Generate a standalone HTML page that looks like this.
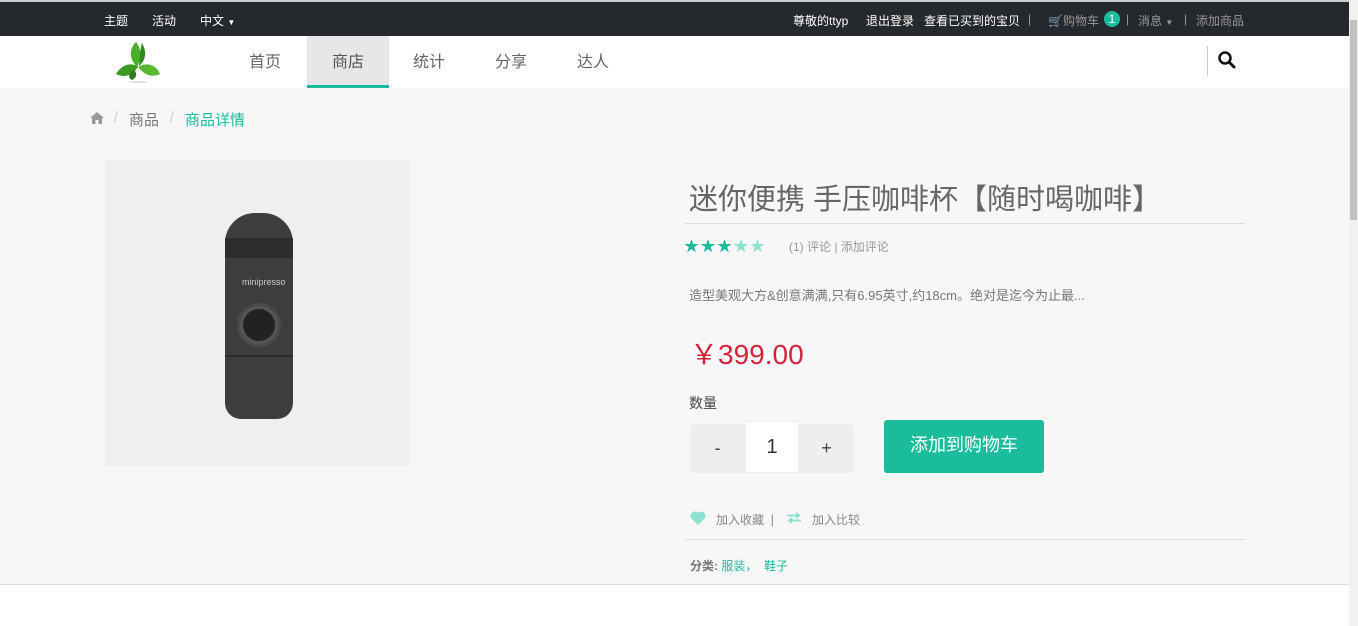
<!DOCTYPE html>
<html><head><meta charset="utf-8"><style>
*{margin:0;padding:0;box-sizing:border-box}
body{width:1358px;height:626px;overflow:hidden;background:#fff;font-family:"Liberation Sans","Noto Sans CJK SC",sans-serif;position:relative}
.a{position:absolute;white-space:nowrap}
#top{left:0;top:0;width:1349px;height:36px;background:#25282d;border-top:2px solid #ccc}
#top .a{font-size:12px;color:#fff;top:10px}
#top .g{color:#999}
#nav{left:0;top:36px;width:1349px;height:52px;background:#fff}
#nav .i{font-size:16px;color:#666;top:12px}
#main{left:0;top:88px;width:1349px;height:497px;background:#f7f7f7;border-bottom:1px solid #ddd}
#sb{left:1349px;top:0;width:9px;height:626px;background:#f1f1f1}
</style></head><body>
<div class="a" id="top">
 <span class="a" style="left:104px">主题</span>
 <span class="a" style="left:152px">活动</span>
 <span class="a" style="left:200px">中文 <span style="font-size:8px">▼</span></span>
 <span class="a" style="left:793px">尊敬的ttyp</span>
 <span class="a" style="left:866px">退出登录</span>
 <span class="a" style="left:924px">查看已买到的宝贝</span>
 <span class="a g" style="left:1028px">|</span>
 <span class="a g" style="left:1048px">🛒购物车</span>
 <span class="a" style="left:1104px;top:9px;width:16px;height:16px;border-radius:8px;background:#1abc9c;color:#fff;text-align:center;line-height:16px">1</span>
 <span class="a g" style="left:1126px">|</span>
 <span class="a g" style="left:1138px">消息 <span style="font-size:8px">▼</span></span>
 <span class="a g" style="left:1184px">|</span>
 <span class="a g" style="left:1196px">添加商品</span>
</div>
<div class="a" id="nav">
 <svg class="a" style="left:114px;top:4px" width="48" height="44" viewBox="0 0 48 44"><path d="M22 2 C14 10 16 20 23 27 C28 18 28 10 22 2Z" fill="#4caf2c"/><path d="M28 3 C26 10 26 18 25 26 C32 20 33 12 28 3Z" fill="#2e8b1f"/><path d="M2 34 C8 24 18 22 24 27 C18 36 10 38 2 34Z" fill="#3a9a22"/><path d="M24 27 C32 22 42 24 46 34 C38 38 30 35 24 27Z" fill="#5ab832"/><path d="M20 30 C14 34 14 38 18 40 C22 38 24 34 20 30Z" fill="#2d7a1a"/><ellipse cx="24" cy="42" rx="10" ry="1" fill="#ddd"/></svg>
 <div class="a" style="left:307px;top:0;width:82px;height:52px;background:#e7e7e7;border-bottom:3px solid #1abc9c"></div>
 <span class="a i" style="left:249px">首页</span>
 <span class="a i" style="left:332px;color:#555">商店</span>
 <span class="a i" style="left:413px">统计</span>
 <span class="a i" style="left:495px">分享</span>
 <span class="a i" style="left:577px">达人</span>
 <div class="a" style="left:1207px;top:10px;width:1px;height:30px;background:#ccc"></div>
 <svg class="a" style="left:1217px;top:14px" width="20" height="20" viewBox="0 0 20 20"><circle cx="8" cy="8" r="5.5" stroke="#111" stroke-width="2.5" fill="none"/><path d="M12 12 L17 17" stroke="#111" stroke-width="3" stroke-linecap="round"/></svg>
</div>
<div class="a" id="main">
 <svg class="a" style="left:90px;top:24px" width="14" height="12" viewBox="0 0 14 12"><path d="M7 0 L14 6 L12 6 L12 12 L8.5 12 L8.5 8 L5.5 8 L5.5 12 L2 12 L2 6 L0 6Z" fill="#999"/></svg>
 <span class="a" style="left:114px;top:21px;font-size:15px;color:#ccc">/</span>
 <span class="a" style="left:129px;top:21px;font-size:15px;color:#777">商品</span>
 <span class="a" style="left:170px;top:21px;font-size:15px;color:#ccc">/</span>
 <span class="a" style="left:185px;top:21px;font-size:15px;color:#1abc9c">商品详情</span>
 <div class="a" style="left:105px;top:72px;width:305px;height:306px;background:#efefef">
  <div class="a" style="left:120px;top:53px;width:68px;height:206px;background:#3c3d3f;border-radius:30px 30px 16px 16px"></div>
  <div class="a" style="left:120px;top:78px;width:68px;height:20px;background:#2c2d2f"></div>
  <div class="a" style="left:120px;top:195px;width:68px;height:2px;background:#2a2a2c"></div>
  <span class="a" style="left:137px;top:117px;font-size:9px;color:#ccc">minipresso</span>
  <div class="a" style="left:132px;top:143px;width:44px;height:44px;border-radius:22px;background:#555;border:3px solid #4a4a4a"></div>
  <div class="a" style="left:138px;top:149px;width:32px;height:32px;border-radius:16px;background:#222"></div>
 </div>
 <span class="a" style="left:689px;top:88px;font-size:29px;color:#666">迷你便携 手压咖啡杯【随时喝咖啡】</span>
 <div class="a" style="left:685px;top:135px;width:560px;height:1px;background:#ddd"></div>
 <span class="a" style="left:684px;top:147px;font-size:15px;letter-spacing:1.5px;color:#1abc9c">★★★<span style="color:#8ee0d0">★★</span></span>
 <span class="a" style="left:789px;top:150px;font-size:12px;color:#999">(1) 评论 | 添加评论</span>
 <span class="a" style="left:689px;top:197px;font-size:13px;color:#777">造型美观大方&amp;创意满满,只有6.95英寸,约18cm。绝对是迄今为止最...</span>
 <span class="a" style="left:690px;top:245px;font-size:28px;color:#d0253a">￥399.00</span>
 <span class="a" style="left:689px;top:305px;font-size:14px;color:#444">数量</span>
 <div class="a" style="left:690px;top:336px;width:55px;height:49px;background:#eee;border-radius:3px 0 0 3px;text-align:center;line-height:49px;font-size:18px;color:#444">-</div>
 <div class="a" style="left:745px;top:333px;width:54px;height:52px;background:#fff;border:1px solid #eee;text-align:center;line-height:50px;font-size:20px;color:#333">1</div>
 <div class="a" style="left:799px;top:336px;width:55px;height:49px;background:#eee;border-radius:0 3px 3px 0;text-align:center;line-height:49px;font-size:18px;color:#444">+</div>
 <div class="a" style="left:884px;top:332px;width:160px;height:53px;background:#1abc9c;border-radius:3px;text-align:center;line-height:51px;font-size:18px;color:#fff">添加到购物车</div>
 <svg class="a" style="left:690px;top:423px" width="16" height="14" viewBox="0 0 16 14"><path d="M8 14 L1.5 7.5 A4 4 0 0 1 8 2 A4 4 0 0 1 14.5 7.5Z" fill="#8ee0d0"/></svg>
 <span class="a" style="left:716px;top:423px;font-size:12px;color:#888">加入收藏 &nbsp;<span style="font-size:13px">|</span></span>
 <svg class="a" style="left:786px;top:424px" width="16" height="12" viewBox="0 0 16 12"><path d="M1 3.5 H13 M10 1 L13 3.5 L10 6 M15 8.5 H3 M6 6 L3 8.5 L6 11" stroke="#8ee0d0" stroke-width="2" fill="none"/></svg>
 <span class="a" style="left:812px;top:423px;font-size:12px;color:#888">加入比较</span>
 <div class="a" style="left:685px;top:451px;width:560px;height:1px;background:#ddd"></div>
 <span class="a" style="left:690px;top:469px;font-size:12px;color:#777"><b>分类:</b> <span style="color:#1abc9c">服装，&nbsp; 鞋子</span></span>
</div>
<div class="a" id="sb"><div class="a" style="left:1px;top:20px;width:7px;height:200px;background:#c1c1c1"></div></div>
</body></html>
